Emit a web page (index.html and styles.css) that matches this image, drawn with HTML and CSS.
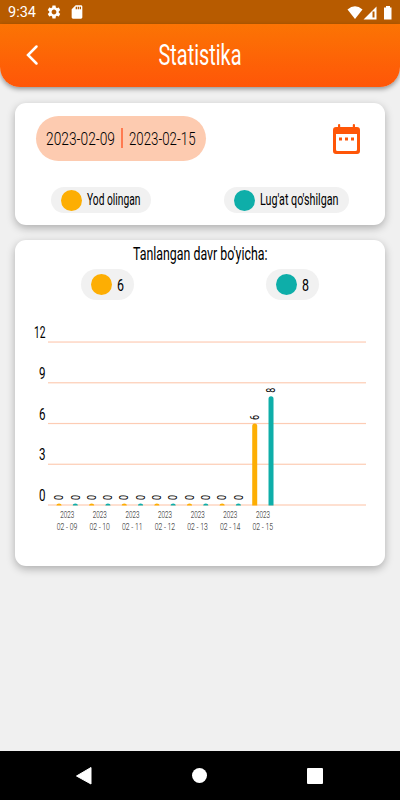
FILE: index.html
```
<!DOCTYPE html>
<html lang="uz">
<head>
  <meta charset="UTF-8" />
  <meta name="viewport" content="width=device-width, initial-scale=1" />
  <title>Statistika</title>
  <link rel="stylesheet" href="styles.css">
</head>
<body>

  <div class="status">
    <span class="clock">9:34</span>
    <svg class="gear" width="16" height="16" viewBox="0 0 24 24"><path fill="#fff" d="M19.14 12.94c.04-.3.06-.61.06-.94 0-.32-.02-.64-.07-.94l2.03-1.58c.18-.14.23-.41.12-.61l-1.92-3.32c-.12-.22-.37-.29-.59-.22l-2.39.96c-.5-.38-1.03-.7-1.62-.94l-.36-2.54c-.04-.24-.24-.41-.48-.41h-3.84c-.24 0-.43.17-.47.41l-.36 2.54c-.59.24-1.13.57-1.62.94l-2.39-.96c-.22-.08-.47 0-.59.22L2.74 8.87c-.12.21-.08.47.12.61l2.03 1.58c-.05.3-.09.63-.09.94s.02.64.07.94l-2.03 1.58c-.18.14-.23.41-.12.61l1.92 3.32c.12.22.37.29.59.22l2.39-.96c.5.38 1.03.7 1.62.94l.36 2.54c.05.24.24.41.48.41h3.84c.24 0 .44-.17.47-.41l.36-2.54c.59-.24 1.13-.56 1.62-.94l2.39.96c.22.08.47 0 .59-.22l1.92-3.32c.12-.22.07-.47-.12-.61l-2.01-1.58zM12 15.6c-1.98 0-3.6-1.62-3.6-3.6s1.62-3.6 3.6-3.6 3.6 1.62 3.6 3.6-1.62 3.6-3.6 3.6z"/></svg>
    <svg class="card-icon" width="16" height="16" viewBox="0 0 24 24"><path fill="#fff" d="M18 2h-8L4 8v12c0 1.100.9 2 2 2h12c1.100 0 2-.9 2-2V4c0-1.100-.9-2-2-2zm-6 6h-2V4h2v4zm3 0h-2V4h2v4zm3 0h-2V4h2v4z"/></svg>
    <svg class="signals" width="48" height="16" viewBox="0 0 48 16">
      <path fill="#fff" d="M0.500 4.500 Q8 -1.800 15.500 4.500 L8 14Z"/>
      <path fill="#fff" fill-rule="evenodd" d="M29.500 1.500V14.500H16.500ZM25.500 6.500V12.500H27.500V6.500Z"/>
      <path fill="#fff" d="M39 1h4v1.500h1.500v12h-7.500v-12H39z"/>
    </svg>
  </div>

  <header class="header">
    <svg class="back" width="12" height="20" viewBox="0 0 12 20"><path d="M10.500 1.500L2 10l8.500 8.500" fill="none" stroke="#fff" stroke-width="2.500" stroke-linecap="round"/></svg>
    <svg class="title" width="84" height="36"><text x="0.500" y="27" textLength="83" lengthAdjust="spacingAndGlyphs">Statistika</text></svg>
  </header>

  <main>
    <section class="card filter">
      <div class="filter-row">
        <div class="range">
          <svg width="69" height="24"><text x="0" y="18" textLength="69" lengthAdjust="spacingAndGlyphs">2023-02-09</text></svg>
          <span class="divider"></span>
          <svg width="67" height="24"><text x="0" y="18" textLength="66.500" lengthAdjust="spacingAndGlyphs">2023-02-15</text></svg>
        </div>
        <svg class="calendar" width="27" height="30" viewBox="0 0 27 30">
          <path fill="#ff5608" fill-rule="evenodd" d="M5 1a1.100 1.100 0 0 1 2.200 0v2h12.600V1A1.100 1.100 0 0 1 22 1v2h2a3 3 0 0 1 3 3v21a3 3 0 0 1-3 3H3a3 3 0 0 1-3-3V6a3 3 0 0 1 3-3h2zM3 10v15.500a1.500 1.500 0 0 0 1.500 1.500h18a1.500 1.500 0 0 0 1.500-1.500V10z"/>
          <path fill="#ff5608" d="M6 13.500h3v3H6zM12 13.500h3v3h-3zM18 13.500h3v3h-3z"/>
        </svg>
      </div>
      <div class="legend">
        <div class="chip">
          <span class="dot yellow"></span>
          <svg width="54" height="24"><text x="0" y="17" textLength="53.500" lengthAdjust="spacingAndGlyphs">Yod olingan</text></svg>
        </div>
        <div class="chip">
          <span class="dot teal"></span>
          <svg width="79" height="24"><text x="0" y="17" textLength="78.500" lengthAdjust="spacingAndGlyphs">Lug'at qo'shilgan</text></svg>
        </div>
      </div>
    </section>

    <section class="card stats">
      <svg class="subtitle" width="135" height="26"><text x="0" y="20" textLength="134.500" lengthAdjust="spacingAndGlyphs">Tanlangan davr bo'yicha:</text></svg>
      <div class="totals">
        <div class="chip big">
          <span class="dot yellow"></span>
          <svg width="7" height="24"><text x="0" y="18" textLength="7" lengthAdjust="spacingAndGlyphs">6</text></svg>
        </div>
        <div class="chip big">
          <span class="dot teal"></span>
          <svg width="7" height="24"><text x="0" y="18" textLength="7" lengthAdjust="spacingAndGlyphs">8</text></svg>
        </div>
      </div>
      <svg class="chart" id="chart" width="370" height="266" viewBox="0 0 370 266"></svg>
    </section>
  </main>

  <nav class="navbar">
    <svg width="16" height="18" viewBox="0 0 16 18"><path fill="#fff" d="M15 0.500V17L0.500 9Z" stroke="#fff" stroke-linejoin="round"/></svg>
    <span class="home"></span>
    <span class="recent"></span>
  </nav>

  <script src="chart.js"></script>
</body>
</html>
```

FILE: styles.css
```
* {
  box-sizing: border-box;
}
body {
  margin: 0;
  width: 400px;
  height: 800px;
  overflow: hidden;
  display: flex;
  flex-direction: column;
  background: #f0f0f0;
  color: #000;
  font-family: Roboto, sans-serif;
}
svg {
  display: block;
  flex: none;
  overflow: visible;
}
.status {
  height: 24px;
  flex: none;
  display: flex;
  align-items: center;
  padding: 0 7px 0 8px;
  background: #b75b00;
  color: #fff;
}
.clock {
  width: 38px;
  font-size: 14.5px;
  line-height: 26px;
  padding-top: 2px;
}
.card-icon {
  margin-left: 7px;
}
.signals {
  margin-left: auto;
  margin-top: 1px;
}
.status .signals {
  margin-right: -2px;
}
.header {
  height: 63px;
  flex: none;
  display: flex;
  align-items: center;
  background: linear-gradient(#fb7404, #ff5608);
  border-radius: 0 0 20px 20px;
  box-shadow: 0 2px 5px rgba(0, 0, 0, 0.4);
}
.back {
  margin-left: 26px;
  margin-top: -1px;
}
.title {
  margin-left: 119.5px;
  margin-top: 1px;
  font-size: 29px;
  fill: #fff;
}
main {
  flex: 1;
  display: flex;
  flex-direction: column;
  gap: 15px;
  padding: 16px 15px 0;
}
.card {
  background: #fff;
  border-radius: 11px;
  box-shadow: 0 3px 8px rgba(0, 0, 0, 0.28);
}
.filter {
  height: 122px;
  padding: 13px 25px 0 21px;
}
.filter-row {
  display: flex;
  align-items: center;
  justify-content: space-between;
}
.range {
  display: flex;
  align-items: center;
  width: 170px;
  height: 45px;
  padding-left: 10px;
  border-radius: 23px;
  background: #fdcbb0;
  font-size: 19px;
  font-weight: 300;
}
.divider {
  width: 2px;
  height: 20px;
  margin: 0 6px;
  background: #ff7a50;
}
.range .divider {
  margin-top: -1px;
}
.calendar {
  margin-top: 1px;
}
.legend {
  display: flex;
  justify-content: space-between;
  margin-top: 26px;
  padding: 0 11px 0 15px;
}
.chip {
  display: flex;
  align-items: center;
  gap: 5px;
  height: 26px;
  padding: 0 10px;
  border-radius: 16px;
  background: #f1f1f1;
  font-size: 16.5px;
}
.chip.big {
  height: 31px;
}
.dot {
  width: 21px;
  height: 21px;
  border-radius: 50%;
}
.yellow {
  background: #fdae03;
}
.teal {
  background: #0eaea9;
}
.stats {
  height: 326px;
}
.subtitle {
  margin: 0 auto;
  font-size: 18px;
}
.totals {
  display: flex;
  justify-content: space-between;
  padding: 3px 66px 0;
}
.axis {
  font-size: 16.5px;
}
.value {
  font-size: 12px;
}
.day {
  font-size: 9.8px;
  font-weight: 300;
  fill: #111;
}
.navbar {
  height: 49px;
  flex: none;
  display: flex;
  align-items: center;
  justify-content: space-between;
  padding: 0 77px 0 76px;
  background: #000;
}
.home {
  width: 15px;
  height: 15px;
  border-radius: 50%;
  background: #fff;
}
.recent {
  width: 16px;
  height: 16px;
  border-radius: 1px;
  background: #fff;
}
```

FILE: chart.js
```
const days = [
  { date: '02 - 09', learned: 0, added: 0 },
  { date: '02 - 10', learned: 0, added: 0 },
  { date: '02 - 11', learned: 0, added: 0 },
  { date: '02 - 12', learned: 0, added: 0 },
  { date: '02 - 13', learned: 0, added: 0 },
  { date: '02 - 14', learned: 0, added: 0 },
  { date: '02 - 15', learned: 6, added: 8 }
];

const base = 205;
const unit = 13.58;
let out = '';

function label(cls, x, y, width, text, extra = '') {
  return `<text class="${cls}" x="${x}" y="${y}" textLength="${width}" lengthAdjust="spacingAndGlyphs" ${extra}>${text}</text>`;
}

function bar(x, value, color) {
  const h = Math.max(value * unit, 1.5);
  const top = base - h;
  const r = Math.min(2.5, h);
  return `<path fill="${color}" d="M${x - 2.5} ${base + 0.5}V${top + r}a2.5 ${r} 0 0 1 5 0V${base + 0.5}z"/>` +
    label('value', x + 4.2, top - 3.5, 5, value, `transform="rotate(-90 ${x + 4.2} ${top - 3.5})"`);
}

for (let v = 0; v <= 12; v += 3) {
  const y = base - v * unit;
  const w = v > 9 ? 11.5 : 6.5;
  out += `<rect x="33" y="${y - 0.6}" width="318" height="1.2" fill="#fdccb4"/>`;
  out += label('axis', 30.5 - w, y - 4, w, v);
}

days.forEach((d, i) => {
  const x = 44 + i * 32.62;
  out += bar(x, d.learned, '#fdae03');
  out += bar(x + 16.3, d.added, '#0eaea9');
  out += label('day', x + 1.2, 217.5, 14, '2023');
  out += label('day', x - 2.2, 229.5, 20.5, d.date);
});

document.getElementById('chart').innerHTML = out;
```
